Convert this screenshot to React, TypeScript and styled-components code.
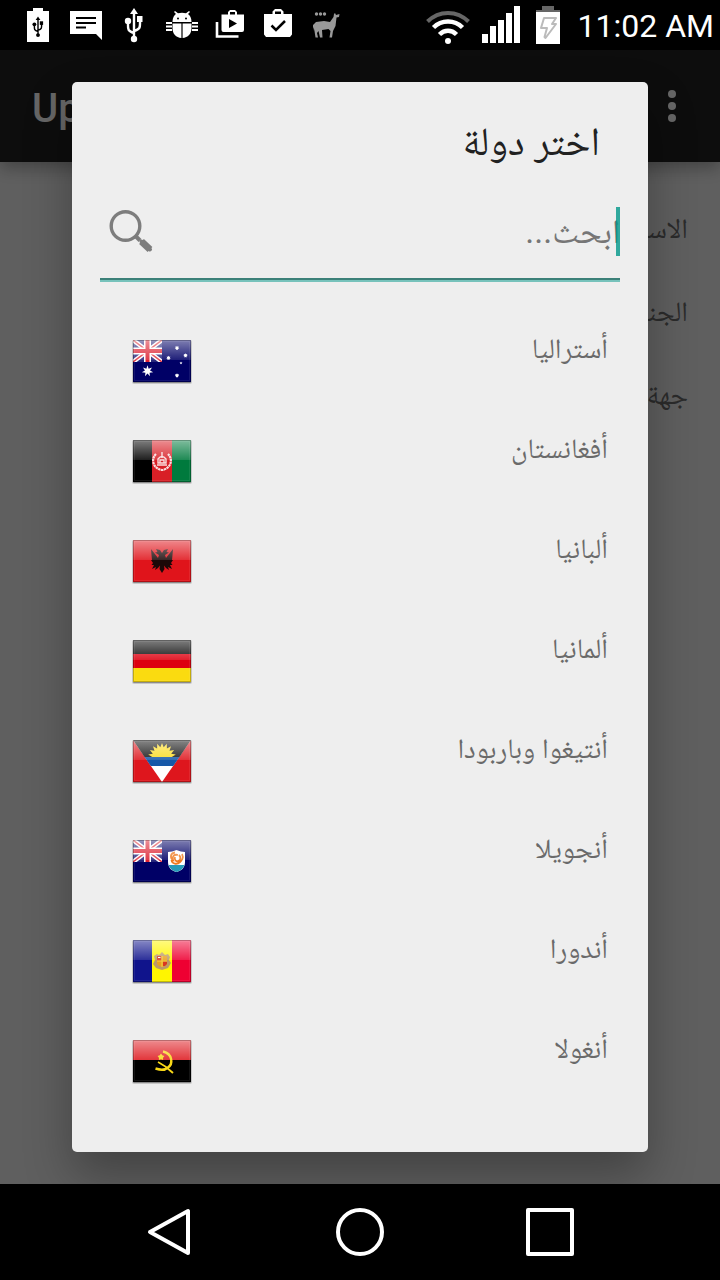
import React from "react";
import styled, { createGlobalStyle } from "styled-components";

const fontStack = `Roboto, "Noto Naskh Arabic", "Noto Sans Arabic", "DejaVu Sans", sans-serif`;

const GlobalStyle = createGlobalStyle`
  *, *::before, *::after { box-sizing: border-box; }
  body {
    margin: 0;
    background: #000;
    font-family: ${fontStack};
  }
  h1, h2, p, ul { margin: 0; padding: 0; }
  ul { list-style: none; }
`;

const Screen = styled.div`
  display: flex;
  flex-direction: column;
  min-height: 100vh;
  background: #000;
`;

const StatusBar = styled.header`
  display: flex;
  align-items: center;
  justify-content: space-between;
  height: 50px;
  padding: 0 6px 0 14px;
  color: #fff;
`;

const StatusGroup = styled.div<{ $gap?: number }>`
  display: flex;
  align-items: center;
  gap: ${(p) => p.$gap ?? 0}px;
`;

const Glyph = styled.svg`
  display: block;
  flex: none;
`;

const Clock = styled.time`
  font-size: 32px;
  line-height: 50px;
  padding: 2px 0 0 6px;
  white-space: nowrap;
`;

const Stage = styled.div`
  display: grid;
  flex: 1;
  grid-template: minmax(0, 1fr) / minmax(0, 1fr);
  overflow: hidden;
`;

const Page = styled.div`
  grid-area: 1 / 1;
  display: flex;
  flex-direction: column;
  background: #eee;
`;

const AppBar = styled.div`
  display: flex;
  align-items: center;
  justify-content: space-between;
  height: 112px;
  padding: 0 24px 0 32px;
  background: #212121;
  color: #fff;
  box-shadow: 0 6px 16px rgba(0, 0, 0, 0.3);
`;

const AppTitle = styled.h1`
  font-size: 40px;
  font-weight: 500;
  line-height: 48px;
  padding-top: 6px;
`;

const IconButton = styled.button`
  display: flex;
  align-items: center;
  justify-content: center;
  width: 48px;
  height: 48px;
  padding: 0;
  border: 0;
  background: none;
  color: inherit;
`;

const Fields = styled.div`
  display: flex;
  flex-direction: column;
  gap: 43px;
  padding: 47px 32px;
  color: #6c6c6c;
  font-size: 28px;
  line-height: 40px;
`;

const Scrim = styled.div`
  grid-area: 1 / 1;
  display: flex;
  flex-direction: column;
  padding: 32px 10%;
  background: rgba(0, 0, 0, 0.6);
  z-index: 1;
`;

const Dialog = styled.section`
  flex: 1;
  padding: 36px 28px 40px;
  border-radius: 5px;
  background: #eee;
  box-shadow: 0 24px 48px rgba(0, 0, 0, 0.3);
`;

const DialogTitle = styled.h2`
  padding: 0 20px;
  color: #212121;
  font-size: 40px;
  font-weight: 400;
  line-height: 48px;
`;

const SearchField = styled.label`
  position: relative;
  display: flex;
  align-items: center;
  height: 100px;
  margin-top: 16px;
  padding-left: 8px;
  border-bottom: 2px solid #77c2bb;
  box-shadow: inset 0 -2px #3b8078;
`;

const SearchInput = styled.input`
  flex: 1;
  min-width: 0;
  height: 64px;
  padding: 0;
  border: 0;
  outline: 0;
  background: none;
  color: #212121;
  font: 34px/48px ${fontStack};
  &::placeholder { color: #767676; opacity: 1; }
`;

const Caret = styled.span`
  position: absolute;
  right: 0;
  top: 25px;
  width: 4px;
  height: 49px;
  background: rgba(0, 150, 136, 0.8);
`;

const CountryList = styled.ul`
  margin-top: 29px;
`;

const CountryRow = styled.button`
  display: flex;
  align-items: center;
  justify-content: space-between;
  width: 100%;
  height: 100px;
  padding: 2px 12px 0 32px;
  border: 0;
  background: none;
  color: #6a6a6a;
  font: 28px/40px ${fontStack};
`;

const CountryName = styled.span`
  padding-bottom: 26px;
`;

const NavBar = styled.nav`
  display: flex;
  height: 96px;
  padding: 0 75px;
  background: #000;
`;

const NavButton = styled.button`
  display: flex;
  flex: 1;
  align-items: center;
  justify-content: center;
  padding: 0;
  border: 0;
  background: none;
`;

function star(cx: number, cy: number, r: number, points: number, inner = 0.45) {
  const out: string[] = [];
  for (let i = 0; i < points * 2; i++) {
    const rad = i % 2 ? r * inner : r;
    const a = (Math.PI * i) / points - Math.PI / 2;
    out.push(`${(cx + rad * Math.cos(a)).toFixed(2)},${(cy + rad * Math.sin(a)).toFixed(2)}`);
  }
  return out.join(" ");
}

const UnionJack = () => (
  <svg x="0" y="0" width="29" height="22" viewBox="0 0 29 22">
    <rect width="29" height="22" fill="#26267c" />
    <path d="M0 0L29 22M29 0L0 22" stroke="#fff" strokeWidth="4.4" />
    <path d="M0 0L29 22M29 0L0 22" stroke="#e0303c" strokeWidth="1.4" />
    <path d="M14.5 0V22M0 11H29" stroke="#fff" strokeWidth="7" />
    <path d="M14.5 0V22M0 11H29" stroke="#dc2030" strokeWidth="4" />
  </svg>
);

const flags: Record<string, React.ReactNode> = {
  au: (
    <>
      <rect width="58" height="42" fill="#000066" />
      <UnionJack />
      <polygon points={star(14.5, 31, 5.8, 7)} fill="#fff" />
      <polygon points={star(44, 8, 2.3, 7, 0.6)} fill="#fff" />
      <polygon points={star(35.5, 18, 2.3, 7, 0.6)} fill="#fff" />
      <polygon points={star(52.5, 15.5, 2.3, 7, 0.6)} fill="#fff" />
      <polygon points={star(48, 23, 1.6, 5)} fill="#fff" />
      <polygon points={star(44, 35.5, 2.3, 7, 0.6)} fill="#fff" />
    </>
  ),
  af: (
    <>
      <rect width="19" height="42" fill="#000" />
      <rect x="19" width="20" height="42" fill="#d81f26" />
      <rect x="39" width="19" height="42" fill="#007a3d" />
      <g fill="none" stroke="#fff" opacity=".85">
        <path d="M23 14C17 20 21 29 29 30C37 29 41 20 35 14" strokeWidth="2.2" strokeDasharray="2.4 .5" />
        <path d="M24 25H34M25 23V19Q29 14 33 19V23ZM29 12V18M27 23V20H31V23" strokeWidth="1.4" />
      </g>
    </>
  ),
  al: (
    <>
      <rect width="58" height="42" fill="#e0141b" />
      <path
        d="M29 13L27 10L23 9L24.5 12L22 12.5L26 15L25 18L18 9L18.5 15L19 20L18 20L20 23L18.5 25L21 25L19 29L23 27L22 30L25 28L27 25.5L26.5 29L29 33L31.5 29L31 25.5L33 28L36 30L35 27L39 29L37 25L39.5 25L38 23L40 20L39 20L39.5 15L40 9L33 18L32 15L36 12.5L33.5 12L35 9L31 10Z"
        fill="#1c0808"
      />
    </>
  ),
  de: (
    <>
      <rect width="58" height="14" fill="#000" />
      <rect y="14" width="58" height="14" fill="#dd0010" />
      <rect y="28" width="58" height="14" fill="#fadb10" />
    </>
  ),
  ag: (
    <>
      <rect width="58" height="42" fill="#de161d" />
      <path d="M0 0H58L29 42Z" fill="#fff" />
      <path d="M0 0H58L46.5 17H11.5Z" fill="#111" />
      <path d="M11.5 17H46.5L40.2 26H17.8Z" fill="#1658a8" />
      <svg width="58" height="17">
        <polygon points={star(29, 17, 14, 18, 0.7)} fill="#fddc20" />
      </svg>
    </>
  ),
  ai: (
    <>
      <rect width="58" height="42" fill="#000066" />
      <UnionJack />
      <path d="M35 12Q39 12 43.5 10Q48 12 52 12V22C52 28 48 31 43.5 32C39 31 35 28 35 22Z" fill="#fff" />
      <path d="M35.5 25H51.5C50 29 47 31 43.5 32C40 31 37 29 35.5 25Z" fill="#279ab8" />
      <path
        d="M42 12.5C37 13 37 18 40 20C39 16 41 14 45 15M49 14C51 18 49 22 45 21C48 20 48 17 46 15M38.5 20C39 24 44 25 47 22C43 22 41 20 42 17"
        fill="none"
        stroke="#ef7a20"
        strokeWidth="1.8"
      />
    </>
  ),
  ad: (
    <>
      <rect width="19" height="42" fill="#10148c" />
      <rect x="19" width="20" height="42" fill="#fff500" />
      <rect x="39" width="19" height="42" fill="#ee0032" />
      <path d="M21 16L24 14L26 15L29 12L32 15L35 14L37 17L36 20L38 23L35 28L29 30L23 28L20 24L22 20Z" fill="#bc9a67" />
      <path d="M24 16H34V24Q32 27 29 27Q26 27 24 24Z" fill="#e8a020" />
      <path d="M24 16H28.5V20.5H24ZM30 21.5H34V24L32 26H30Z" fill="#d93820" />
      <path d="M25 17.5H27.5" stroke="#fff" />
      <path d="M24 21H34M29 16V27" stroke="#f3d24b" />
    </>
  ),
  ao: (
    <>
      <rect width="58" height="20" fill="#de1a20" />
      <rect y="20" width="58" height="22" fill="#000" />
      <g fill="none" stroke="#f8d818">
        <path d="M30 11.5C40 14 40 24 35 27.5C31 31 27 30 22.5 28.5" strokeWidth="2.4" />
        <path d="M25 22C29 24 35 28 40 33" strokeWidth="1.8" />
      </g>
      <polygon points={star(28, 17, 3.6, 5, 0.6)} fill="#f8d818" />
    </>
  ),
};

const Flag = ({ code }: { code: string }) => (
  <Glyph width="60" height="46" viewBox="-1 -1 60 46" aria-hidden="true">
    <defs>
      <linearGradient id={`gloss-${code}`} x1="0" y1="0" x2="0" y2="1">
        <stop offset="0" stopColor="#fff" stopOpacity=".5" />
        <stop offset="1" stopColor="#fff" stopOpacity=".12" />
      </linearGradient>
    </defs>
    <rect x="-1" y="0" width="60" height="44" rx="2" fill="#000" opacity=".16" />
    <rect x="0" y="1" width="58" height="42" rx="1" fill="#000" opacity=".3" />
    {flags[code]}
    <rect width="58" height="20" fill={`url(#gloss-${code})`} />
    <rect x=".5" y=".5" width="57" height="41" fill="none" stroke="#000" strokeOpacity=".22" />
    <rect x="1.5" y="1.5" width="55" height="39" fill="none" stroke="#fff" strokeOpacity=".08" />
  </Glyph>
);

const UsbTrident = () => (
  <>
    <path d="M24 13V38M24 33C17 31 18 29 18 22M24 31C31 29 30 27 30 19" fill="none" stroke="currentColor" strokeWidth="2.4" />
    <path d="M24 8L28 14H20Z" fill="currentColor" />
    <circle cx="24" cy="39" r="3.2" fill="currentColor" />
    <circle cx="18" cy="21" r="3.2" fill="currentColor" />
    <rect x="27" y="16" width="5.5" height="6" fill="currentColor" />
  </>
);

const Slot = ({ children }: { children: React.ReactNode }) => (
  <Glyph width="48" height="50" viewBox="0 0 48 50" fill="currentColor" aria-hidden="true">
    {children}
  </Glyph>
);

const NotificationIcons = () => (
  <StatusGroup>
    <Slot>
      <path d="M19 8H29V11H35V42H13V11H19Z" />
      <g color="#000" transform="translate(9.6 11.7) scale(.6)">
        <UsbTrident />
      </g>
    </Slot>
    <Slot>
      <path d="M8 11H40V40L34 34H8Z" />
      <path d="M14 18H34M14 23H34M14 27.5H24" stroke="#000" strokeWidth="2" />
    </Slot>
    <Slot>
      <UsbTrident />
    </Slot>
    <Slot>
      <path d="M14.5 22C14.5 17 17 14.5 18 14L16 12L17 11L20 13.3Q24 12 28 13.3L31 11L32 12L30 14C32 15.5 33.5 18 33.5 22Z" />
      <path d="M14.5 23.5H23.4V38C18 37.5 14.5 34 14.5 28ZM24.6 23.5H33.5V28C33.5 34 30 37.5 24.6 38Z" />
      <path d="M8 23H14M8 26.5H14M8 30H14M34 23H40M34 26.5H40M34 30H40" stroke="currentColor" strokeWidth="1.8" />
      <circle cx="20" cy="18.5" r="1" fill="#000" />
      <circle cx="28" cy="18.5" r="1" fill="#000" />
    </Slot>
    <Slot>
      <path fillRule="evenodd" d="M15.5 14.5H22V12L24 10H29L31 12V14.5H38V30Q38 32 36 32H17.5Q15.5 32 15.5 30ZM24 14.5H29V12H24ZM23 19V28L31 23.5Z" />
      <path d="M11 22V36.5H32.5" fill="none" stroke="currentColor" strokeWidth="2.6" />
    </Slot>
    <Slot>
      <path fillRule="evenodd" d="M10 14H18.5V11.5L21 9H27L29.5 11.5V14H38V34.5L36 37H12L10 34.5ZM21 14H27V11.5H21Z" />
      <path d="M17.5 25.5L22 30L31 21" fill="none" stroke="#000" strokeWidth="2.5" />
    </Slot>
    <Slot>
      <g fill="#999">
        <path d="M33 13L34 15L37.5 14L37 17L34.5 17.5L33.5 26L31 31L30 37.5H27.5L28.5 31L26.5 29L20 30L20.5 37.5H18L16.5 31L15 33L16 37.5H13.5L12.5 31L11.5 27L11 31L11 25L14 22L22 21L28 22L31.5 17L32 14Z" />
        <circle cx="14.5" cy="14" r="1.7" />
        <circle cx="18.5" cy="14" r="1.7" />
        <circle cx="22.5" cy="14" r="1.7" />
      </g>
    </Slot>
  </StatusGroup>
);

const SystemIcons = () => (
  <>
    <Glyph width="44" height="50" viewBox="0 0 44 50" fill="none" aria-hidden="true">
      <path d="M1.5 21.5C13 10 31 10 42.5 21.5" stroke="#666" strokeWidth="4" />
      <path d="M7.5 27.5C15.5 19.5 28.5 19.5 36.5 27.5" stroke="#fff" strokeWidth="4.5" />
      <path d="M13.5 34.5C18.5 29.5 25.5 29.5 30.5 34.5" stroke="#fff" strokeWidth="4.5" />
      <circle cx="22" cy="41" r="3" fill="#fff" />
    </Glyph>
    <Glyph width="38" height="50" viewBox="0 0 38 50" fill="#fff" aria-hidden="true">
      <path d="M0 34H6V43H0ZM8 26H14V43H8ZM16 20H22V43H16ZM24 13H30V43H24ZM32 6H38V43H32Z" />
    </Glyph>
    <Glyph width="28" height="50" viewBox="-4 0 28 50" aria-hidden="true">
      <path d="M6 6H18V10H24V12H0V10H6Z" fill="#666" />
      <rect y="12" width="24" height="32" fill="#fff" />
      <path d="M8 18H20L16 24H20L9.5 38L8.5 37L11 28H5Z" fill="none" stroke="#bbb" strokeWidth="2" strokeLinejoin="round" />
    </Glyph>
  </>
);

const countries = [
  { code: "au", name: "أستراليا" },
  { code: "af", name: "أفغانستان" },
  { code: "al", name: "ألبانيا" },
  { code: "de", name: "ألمانيا" },
  { code: "ag", name: "أنتيغوا وباربودا" },
  { code: "ai", name: "أنجويلا" },
  { code: "ad", name: "أندورا" },
  { code: "ao", name: "أنغولا" },
];

export default function App() {
  return (
    <>
      <GlobalStyle />
      <Screen>
        <StatusBar>
          <NotificationIcons />
          <StatusGroup $gap={12}>
            <SystemIcons />
            <Clock>11:02 AM</Clock>
          </StatusGroup>
        </StatusBar>
        <Stage>
          <Page>
            <AppBar>
              <AppTitle>Update</AppTitle>
              <IconButton type="button" aria-label="More options">
                <Glyph width="8" height="32" viewBox="0 0 8 32" fill="currentColor">
                  <circle cx="4" cy="4" r="4" />
                  <circle cx="4" cy="16" r="4" />
                  <circle cx="4" cy="28" r="4" />
                </Glyph>
              </IconButton>
            </AppBar>
            <Fields dir="rtl">
              <p>الاسم</p>
              <p>الجنسية</p>
              <p>جهة العمل</p>
            </Fields>
          </Page>
          <Scrim>
            <Dialog role="dialog" aria-labelledby="dialog-title" dir="rtl" lang="ar">
              <DialogTitle id="dialog-title">اختر دولة</DialogTitle>
              <SearchField>
                <SearchInput type="text" placeholder="ابحث..." aria-label="ابحث" />
                <Caret />
                <Glyph width="48" height="48" viewBox="0 0 48 48" fill="none" stroke="#7d7d7d" aria-hidden="true">
                  <circle cx="17.5" cy="19" r="14.3" strokeWidth="3.4" />
                  <path d="M28 29.5L32 33.5" strokeWidth="4" />
                  <path d="M33.5 34.5L42 42.5" strokeWidth="7" />
                  <path d="M33.5 34.5L42 42.500" strokeWidth="4" strokeLinecap="round" />
                </Glyph>
              </SearchField>
              <CountryList>
                {countries.map((c) => (
                  <li key={c.code}>
                    <CountryRow type="button">
                      <CountryName>{c.name}</CountryName>
                      <Flag code={c.code} />
                    </CountryRow>
                  </li>
                ))}
              </CountryList>
            </Dialog>
          </Scrim>
        </Stage>
        <NavBar>
          <NavButton type="button" aria-label="Back">
            <Glyph width="48" height="48" viewBox="0 0 48 48" fill="none" stroke="#fff" strokeWidth="4" strokeLinejoin="round">
              <path d="M42 3V45L4 24Z" />
            </Glyph>
          </NavButton>
          <NavButton type="button" aria-label="Home">
            <Glyph width="48" height="48" viewBox="0 0 48 48" fill="none" stroke="#fff" strokeWidth="4">
              <circle cx="24" cy="24" r="22" />
            </Glyph>
          </NavButton>
          <NavButton type="button" aria-label="Recent apps">
            <Glyph width="48" height="48" viewBox="0 0 48 48" fill="none" stroke="#fff" strokeWidth="4" strokeLinejoin="round">
              <rect x="2" y="2" width="44" height="44" />
            </Glyph>
          </NavButton>
        </NavBar>
      </Screen>
    </>
  );
}
